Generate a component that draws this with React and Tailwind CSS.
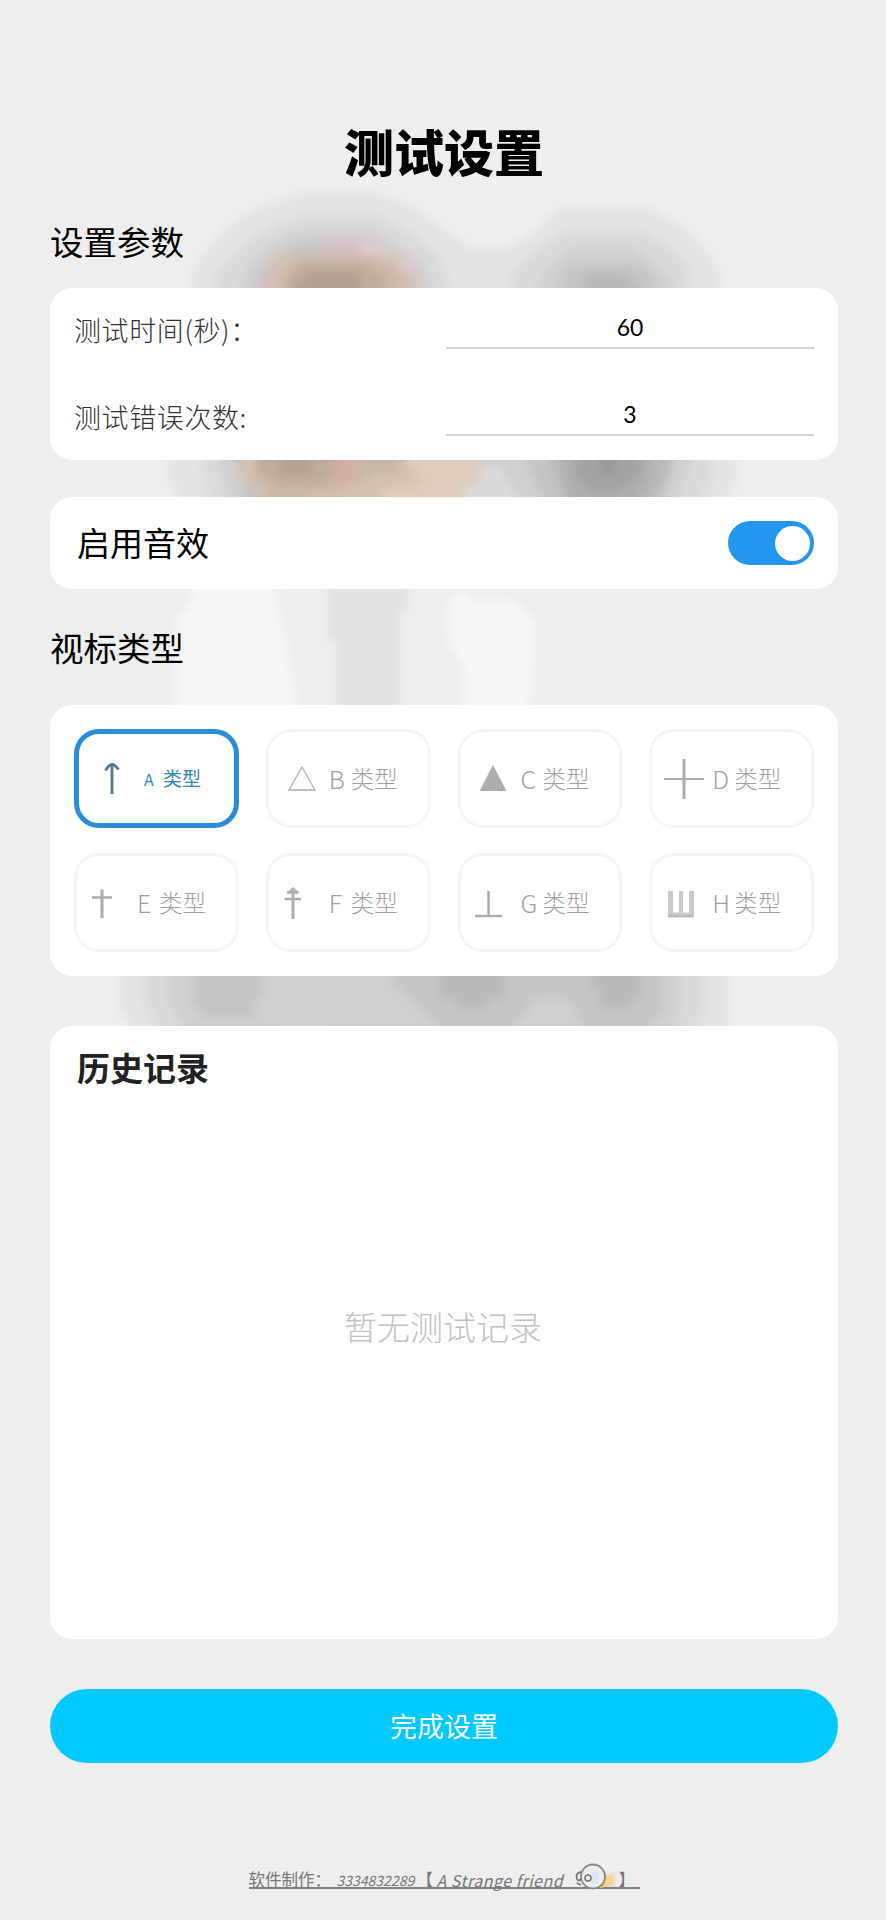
import { useState } from "react";

const TYPES = ["A", "B", "C", "D", "E", "F", "G", "H"];

const TypeIcon = ({ type }) => {
  const stroke = { fill: "none", stroke: "#adadad", strokeWidth: 2 };

  return (
    <svg className="h-10 w-10 shrink-0" viewBox="0 0 40 40">
      {type === "A" && (
        <g fill="none" stroke="#547a8c" strokeWidth="2.8">
          <path d="M23 6V35" />
          <path d="M16.500 11.500Q20 5.500 23 5.500T29.500 10.500" />
        </g>
      )}
      {type === "B" && (
        <path {...stroke} strokeWidth="1.3" d="M21 8L34 31H8Z" />
      )}
      {type === "C" && <path fill="#adadad" d="M20 6L33.500 32H6.500Z" />}
      {type === "D" && (
        <g {...stroke}>
          <path strokeWidth="3" d="M20 0V40" />
          <path d="M0 20H40" />
        </g>
      )}
      {type === "E" && (
        <g {...stroke}>
          <path strokeWidth="3.2" d="M13 6.500V35" />
          <path strokeWidth="2.600" d="M3 14.500H23" />
        </g>
      )}
      {type === "F" && (
        <g {...stroke}>
          <path strokeWidth="3" d="M12 5V36" />
          <path strokeWidth="2.500" d="M6 9.500H17.500M3.500 16H20" />
          <path strokeWidth="1.5" d="M7 10L12 5L17 10" />
        </g>
      )}
      {type === "G" && (
        <g {...stroke}>
          <path strokeWidth="2.500" d="M15.500 8V33" />
          <path strokeWidth="2.500" d="M2 33H29" />
        </g>
      )}
      {type === "H" && (
        <g {...stroke} stroke="#c9c9c9">
          <path strokeWidth="5" d="M6.500 8V32H27.500V8" />
          <path strokeWidth="4" d="M17 8V32" />
          <path stroke="#b5b5b5" strokeWidth="1.5" d="M5 33H29" />
        </g>
      )}
    </svg>
  );
};

const Backdrop = () => (
  <svg
    className="absolute inset-0 -z-10 h-[1920px] w-[886px] blur-[4px]"
    viewBox="0 0 886 1920"
  >
    {/* heads */}
    <path fill="#e4e4e4" d="M192 310V272L208 248L232 224L256 208L304 192H376L416 208L448 232L470 248H504L536 232L560 208H648L680 224L704 248L720 272V310Z" />
    <path fill="#dadada" d="M216 310V272L248 240L280 224L304 216H376L408 232L440 256L456 310Z" />
    <path fill="#d0d0d0" d="M232 310L248 264L272 244L296 232H376L400 248L424 264L440 310Z" />
    <path fill="#c6c6c6" d="M244 310L264 264L288 248L312 240H384V260L416 288V310Z" />
    <path fill="#d4bfc6" d="M256 272H272V310H256ZM320 240H384V256H320Z" />
    <path fill="#dec8d0" d="M360 240H384V256H360ZM400 256H416V272H400Z" />
    <path fill="#d4c1b1" d="M272 256H400V272H416V310H272Z" />
    <path fill="#cab7a8" d="M280 272H288V264H296V256H376V264H392V272H400V310H280Z" />
    <path fill="#bfac9d" d="M288 280L304 264H368V272H384V310H288Z" />
    <path fill="#b4a193" d="M304 272H360V310H296V280H304Z" />
    <path fill="#dadada" d="M512 310V272L528 256L552 240L568 232H640L672 248L688 264V310Z" />
    <path fill="#d0d0d0" d="M528 310L544 272L560 256L576 248H632L656 264L672 280V310Z" />
    <path fill="#c6c6c6" d="M548 310L568 264H640L656 280V310Z" />
    <path fill="#bababa" d="M576 310L584 272H624L640 288V310Z" />

    {/* shoulders */}
    <path fill="#e4e4e4" d="M168 445H736V476L724 515H186L168 476Z" />
    <path fill="#dadada" d="M200 445H712V478L696 515H208Z" />
    <path fill="#d0d0d0" d="M216 445H696L672 515H232Z" />
    <path fill="#c4c4c4" d="M232 445H256V515H248Z" />
    <path fill="#dadada" d="M480 466H500L528 515H464V484H480Z" />
    <path fill="#d5c2b3" d="M240 445H480V484H464V515H256V484H240Z" />
    <path fill="#dfccbc" d="M400 445H480V484H464V515H384V490L424 484Z" />
    <path fill="#cab7a8" d="M256 445H400V475H368V484H344V492H312V515H264V484H256Z" />
    <path fill="#bfac9d" d="M256 445H344V475H328V484H272V475H256Z" />
    <path fill="#b4a193" d="M280 445H312V475H280Z" />
    <path fill="#d8aea6" d="M336 445H352V484H336Z" />
    <path fill="#c4c4c4" d="M520 445H680L656 515H552L536 484Z" />
    <path fill="#b8b8b8" d="M545 445H668V475L648 515H568Z" />
    <path fill="#adadad" d="M560 445H650V475L632 515H576Z" />
    <path fill="#a3a3a3" d="M576 445H640V475L616 492H592L576 475Z" />
    <path fill="#999999" d="M600 445H616V475H600Z" />

    {/* sleeves */}
    <path fill="#f7f7f7" d="M192 575H270L282 625L288 655L296 700V725H176V620L192 600Z" />
    <path fill="#e2e2e2" d="M328 575H408V610H400V725H336V640H328Z" />
    <path fill="#f7f7f7" d="M456 592H470V600H512L534 620V660L528 725H464V670L448 640V600H456Z" />

    {/* feet */}
    <path fill="#e4e4e4" d="M120 955H728V1045H128V1016H120Z" />
    <path fill="#dadada" d="M144 955H704V1010L690 1045H164L144 1000Z" />
    <path fill="#d0d0d0" d="M168 955H680V1008L664 1045H192L168 1000Z" />
    <path fill="#c6c6c6" d="M192 955H264V998H256V1018H200V1008H192Z" />
    <path fill="#c6c6c6" d="M392 955H664V1008L648 1028H584L568 998H536L512 1028H440L392 984Z" />
    <path fill="#bababa" d="M440 955H504V998H488V1008H456V998H440ZM592 955H640V998H632V1008H600V988H592Z" />
    <path fill="#dadada" d="M272 1028H336V1045H272Z" />
  </svg>
);

const Field = ({ label, value, onChange }) => (
  <div className="flex items-center justify-between">
    <label className="pt-2 text-[27px] font-light tracking-[0.6px] text-[#333]">
      {label}
    </label>
    <input
      className="h-[46px] w-[368px] border-b-2 border-[#d4d4d4] bg-transparent pt-1 text-center font-['Lato',sans-serif] text-[23px] text-black outline-none"
      value={value}
      onChange={(e) => onChange(e.target.value)}
    />
  </div>
);

export default function App() {
  const [seconds, setSeconds] = useState("60");
  const [errors, setErrors] = useState("3");
  const [sound, setSound] = useState(true);
  const [selected, setSelected] = useState("A");

  return (
    <div className="relative isolate flex h-[1920px] w-[886px] flex-col overflow-hidden bg-[#eeeeee] pr-12 pl-[50px] font-['Noto_Sans_CJK_SC',sans-serif] text-black">
      <Backdrop />

      <h1 className="mt-[116px] text-center text-[50px] leading-[68px] font-black">
        测试设置
      </h1>

      <h2 className="mt-[35px] text-[33.500px] leading-[44px]">设置参数</h2>

      <section className="mt-[25px] flex h-[172px] flex-col gap-[38px] rounded-[22px] bg-white px-6 pt-[14px]">
        <Field label="测试时间(秒)：" value={seconds} onChange={setSeconds} />
        <Field label="测试错误次数:" value={errors} onChange={setErrors} />
      </section>

      <section className="mt-[37px] flex h-[92px] items-center justify-between rounded-[22px] bg-white pr-6 pl-[27px]">
        <span className="text-[33px]">启用音效</span>
        <button
          onClick={() => setSound(!sound)}
          className={`flex h-11 w-[86px] items-center rounded-full p-[4.500px] ${
            sound ? "justify-end bg-[#2596f0]" : "justify-start bg-gray-300"
          }`}
        >
          <span className="h-[35px] w-[35px] rounded-full bg-white" />
        </button>
      </section>

      <h2 className="mt-[36px] text-[33.500px] leading-[44px]">视标类型</h2>

      <section className="mt-[36px] grid h-[271px] grid-cols-4 grid-rows-2 gap-x-[27px] gap-y-[25px] rounded-[22px] bg-white p-6">
        {TYPES.map((type) => (
          <button
            key={type}
            onClick={() => setSelected(type)}
            className={`flex items-center rounded-[25px] text-left whitespace-nowrap ${
              selected === type
                ? "border-[5px] border-[#2b8cd9] pl-2.5 text-[19px] text-[#3585b5]"
                : "border-[3px] border-[#f5f5f5] pl-3 text-[23.500px] font-light text-[#a0a0a0]"
            }`}
          >
            <TypeIcon type={type} />
            <span
              className={
                selected === type
                  ? "ml-[15px] w-[19px] text-[16px]"
                  : "ml-2 w-[22px] text-[25px] leading-none"
              }
            >
              {type}
            </span>
            <span>类型</span>
          </button>
        ))}
      </section>

      <section className="mt-[50px] flex h-[613px] flex-col rounded-[22px] bg-white pr-6 pl-[27px]">
        <h3 className="mt-[19px] text-[33px] leading-[44px] font-bold text-[#222]">
          历史记录
        </h3>
        <p className="mt-[215px] pr-[5px] text-center text-[33px] leading-[44px] font-light text-[#c2c2c2]">
          暂无测试记录
        </p>
      </section>

      <button className="mt-[50px] h-[74px] shrink-0 rounded-full bg-[#00caff] text-[27px] text-white">
        完成设置
      </button>

      <footer className="mt-[103px] flex h-[23px] w-[391px] items-center self-center border-b-2 border-[#808080] pt-1.5 text-[16.500px] leading-none whitespace-nowrap text-[#777]">
        <span className="w-[86px] shrink-0">软件制作：</span>
        <span className="w-[82px] shrink-0 pl-0.5 text-[14px] italic">
          3334832289
        </span>
        <span className="w-[18px] shrink-0">【</span>
        <span className="w-[136px] shrink-0 pl-0.5 text-[16px] tracking-[0.5px] italic">
          A Strange friend
        </span>
        <svg
          className="-mt-1.5 h-[27px] w-[48px] shrink-0"
          viewBox="0 0 48 27"
          fill="none"
        >
          <path d="M27 10Q36 6 37 17Q37 24 29 25Z" fill="#f3c65c" />
          <path d="M35 11L45 9V24H34Z" fill="#f2dfd4" />
          <path d="M35 13L42 12V22L33 24Z" fill="#f5d58b" />
          <circle cx="22" cy="13.500" r="12" fill="#eeeeee" stroke="#888" strokeWidth="1.800" />
          <path d="M21 9H28V21H21Z" fill="#dbe5f5" />
          <circle cx="17" cy="15" r="3" stroke="#777" strokeWidth="1.500" />
          <path d="M10 9Q4 10 6 16Q8 19 10 16M6 20L10 22" stroke="#777" strokeWidth="1.800" />
        </svg>
        <span>】</span>
      </footer>
    </div>
  );
}
